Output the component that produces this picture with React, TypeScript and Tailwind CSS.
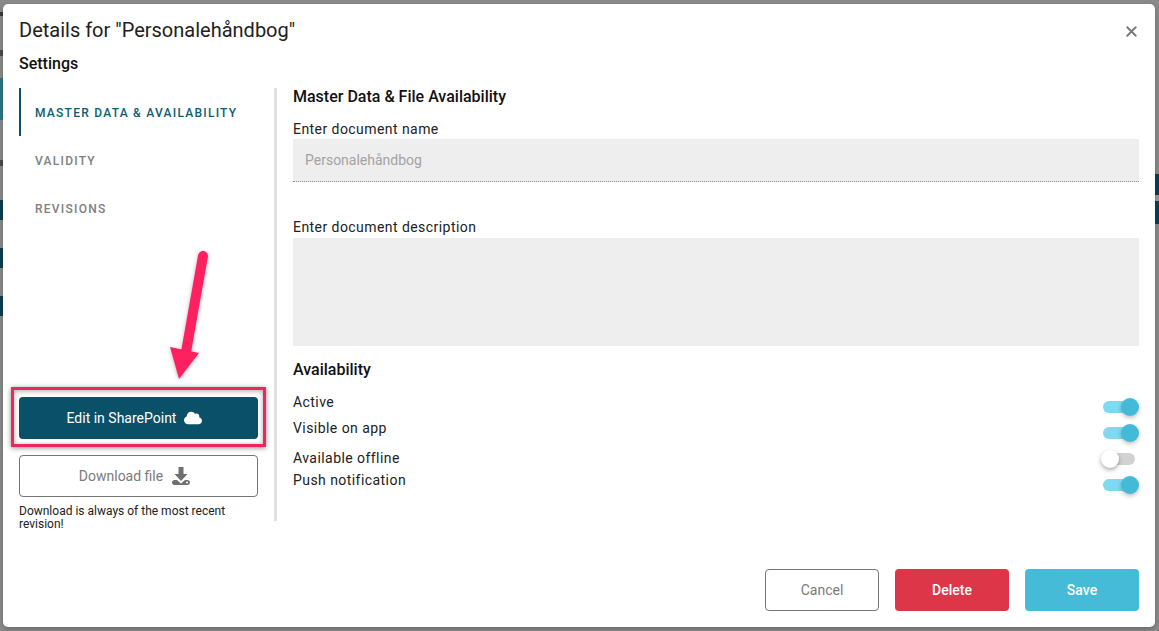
import { X } from "lucide-react";
import { FaCloud } from "react-icons/fa";

const Toggle = ({ on }: { on: boolean }) => (
  <div className="relative h-[12px] w-[36px]">
    <div className={on ? "h-[12px] w-[32px] rounded-full bg-[#7fd9f0]" : "h-[12px] w-[32px] rounded-full bg-[#d2d2d2]"} />
    {on ? (
      <div className="absolute right-0 top-[-3px] h-[18px] w-[18px] rounded-full bg-[#43bbd8] shadow-[0_2px_4px_rgba(0,0,0,0.25)]" />
    ) : (
      <div className="absolute left-[-2px] top-[-3px] h-[18px] w-[18px] rounded-full bg-white shadow-[0_2px_4px_rgba(0,0,0,0.35)]" />
    )}
  </div>
);

const DownloadIcon = () => (
  <svg width="18" height="18" viewBox="0 0 18 18" fill="#6f6f6f">
    <path d="M6.5 0h5v7h4L9 14 2.5 7h4Z" />
    <path d="M2.5 13H5l4 3.5L13 13h2.5c1.4 0 2.5 1.1 2.5 2.5S16.9 18 15.5 18h-13C1.1 18 0 16.9 0 15.5S1.1 13 2.5 13Z" />
    <circle cx="15" cy="15.5" r="1" fill="white" />
  </svg>
);

const App = () => {
  return (
    <div className="relative h-[631px] w-[1159px] overflow-hidden bg-[#8a8a8a] pl-[3px] pt-[4px] font-['Roboto',sans-serif]">
      {/* bits of the page behind the dialog */}
      <div className="absolute left-0 top-[12px] h-[4px] w-[3px] bg-[#3a3a3a]" />
      <div className="absolute left-0 top-[50px] h-[6px] w-[3px] bg-[#4a4a4a]" />
      <div className="absolute left-0 top-[78px] h-[42px] w-[3px] bg-[#2f7686]" />
      <div className="absolute left-0 top-[160px] h-[6px] w-[3px] bg-[#4a4a4a]" />
      <div className="absolute left-0 top-[200px] h-[20px] w-[3px] bg-[#0d3f4f]" />
      <div className="absolute left-0 top-[248px] h-[20px] w-[3px] bg-[#0d3f4f]" />
      <div className="absolute left-0 top-[296px] h-[20px] w-[3px] bg-[#0d3f4f]" />
      <div className="absolute right-0 top-[174px] h-[50px] w-[4px] bg-[#0d3f4f]" />
      <div className="absolute right-0 top-[195px] h-[6px] w-[4px] bg-[#9a9a9a]" />

      <div className="relative flex h-[623px] w-[1152px] flex-col rounded-[5px] bg-white px-[16px] shadow-[0_2px_5px_rgba(0,0,0,0.25)]">
        <div className="flex items-start justify-between pt-[13px]">
          <h1 className="text-[20px] leading-[26px] text-[#212121]">Details for "Personalehåndbog"</h1>
          <X size={17} strokeWidth={2.6} className="mr-[-1px] mt-[6px] text-[#777777]" />
        </div>
        <div className="mt-[11px] text-[16px] font-medium leading-[20px] text-[#111111]">Settings</div>

        <div className="mt-[14px] flex">
          <div className="flex h-[433px] w-[255px] shrink-0 flex-col">
            <div className="flex h-[48px] shrink-0 items-center border-l-2 border-[#0b5069] pl-[14px] pt-[2px] text-[12px] font-medium tracking-[1.25px] text-[#0f5c75]">
              MASTER DATA &amp; AVAILABILITY
            </div>
            <div className="flex h-[48px] shrink-0 items-center pl-[16px] pt-[2px] text-[12px] font-medium tracking-[1.25px] text-[#808080]">
              VALIDITY
            </div>
            <div className="flex h-[48px] shrink-0 items-center pl-[16px] pt-[2px] text-[12px] font-medium tracking-[1.25px] text-[#808080]">
              REVISIONS
            </div>
            <div className="mt-[165px] w-[239px] shrink-0">
              <button className="flex h-[42px] w-full items-center justify-center gap-[8px] rounded-[4px] bg-[#0b5069] pr-[8px] text-[14px] text-white">
                Edit in SharePoint <FaCloud size={18} />
              </button>
              <button className="mt-[16px] flex h-[42px] w-full items-center justify-center gap-[9px] rounded-[4px] border border-[#757575] bg-white pr-[8px] text-[14px] text-[#7b7b7b]">
                Download file <DownloadIcon />
              </button>
              <p className="mt-[8px] text-[12px] leading-[12.5px] text-[#212121]">
                Download is always of the most recent revision!
              </p>
            </div>
          </div>

          <div className="h-[433px] w-[3px] shrink-0 bg-[#e0e0e0]" />

          <div className="flex-1 pl-[16px]">
            <h2 className="mt-[-1px] text-[16px] font-medium leading-[20px] text-[#111111]">Master Data &amp; File Availability</h2>
            <div className="mt-[13px] text-[14px] leading-[18px] tracking-[0.44px] text-[#212121]">Enter document name</div>
            <div className="mt-[1px] flex h-[43px] items-center border-b border-dotted border-[#8f8f8f] bg-[#eeeeee] pl-[12px] text-[14px] text-[#a3a3a3]">
              Personalehåndbog
            </div>
            <div className="mt-[36px] text-[14px] leading-[18px] tracking-[0.44px] text-[#212121]">Enter document description</div>
            <div className="mt-[2px] h-[108px] bg-[#eeeeee]" />
            <h2 className="mt-[14px] text-[16px] font-medium leading-[20px] text-[#111111]">Availability</h2>

            <div className="mt-[13px] flex items-start justify-between text-[14px] leading-[18px] tracking-[0.44px] text-[#212121]">
              <div>
                <div>Active</div>
                <div className="mt-[8px]">Visible on app</div>
                <div className="mt-[12px]">Available offline</div>
                <div className="mt-[4px]">Push notification</div>
              </div>
              <div className="flex flex-col gap-[14px] pt-[8px]">
                <Toggle on />
                <Toggle on />
                <Toggle on={false} />
                <Toggle on />
              </div>
            </div>
          </div>
        </div>

        <div className="mt-[48px] flex justify-end gap-[16px]">
          <button className="h-[42px] w-[114px] rounded-[4px] border border-[#757575] bg-white text-[14px] text-[#7b7b7b]">Cancel</button>
          <button className="h-[42px] w-[114px] rounded-[4px] bg-[#dd3649] text-[14px] font-medium text-white">Delete</button>
          <button className="h-[42px] w-[114px] rounded-[4px] bg-[#45bbd8] text-[14px] font-medium text-white">Save</button>
        </div>
      </div>

      {/* annotation over the page: red box and arrow */}
      <div className="absolute left-[11px] top-[387px] h-[60px] w-[255px] border-[3px] border-[#f0245e] shadow-[0_1px_5px_rgba(0,0,0,0.45),inset_0_1px_5px_rgba(0,0,0,0.35)]" />
      <svg className="absolute left-[165px] top-[245px] drop-shadow-[0_1px_2px_rgba(0,0,0,0.3)]" width="50" height="140" viewBox="0 0 50 140">
        <path d="M38 11 L21 107" stroke="#ff2060" strokeWidth="10" strokeLinecap="round" fill="none" />
        <path d="M5 102 L34 108 L14 134Z" fill="#ff2060" />
      </svg>
    </div>
  );
};

export default App;
